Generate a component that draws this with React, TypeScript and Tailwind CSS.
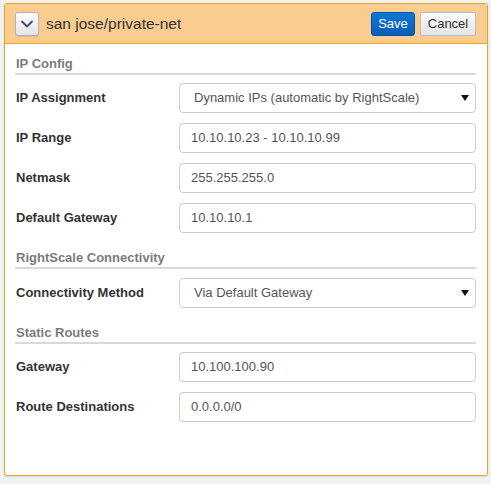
import React from "react";

const font = { fontFamily: '"Liberation Sans", Arial, sans-serif' };

function Heading({ children, mt }: { children: React.ReactNode; mt: string }) {
  return (
    <div className={`${mt} border-b-2 border-[#d9d9d9] text-[13px] leading-[18px] font-bold text-[#7b7b7b] pl-[1px]`}>
      {children}
    </div>
  );
}

function Row({ label, value, select, mt = "mt-[10px]" }: { label: string; value: string; select?: boolean; mt?: string }) {
  return (
    <div className={`flex items-center h-[30px] ${mt}`}>
      <div className="w-[164px] pl-[1px] text-[13px] font-bold text-[#333]">{label}</div>
      <div className="flex-1 h-[30px] border border-[#cccccc] rounded-[4px] bg-white flex items-center justify-between">
        <span className={`${select ? "pl-[14px]" : "pl-[11px]"} text-[13px] text-[#555]`}>{value}</span>
        {select && (
          <svg width="8" height="6" viewBox="0 0 8 6" className="mr-[6px]">
            <path d="M0 0 L8 0 L4 6 Z" fill="#111" />
          </svg>
        )}
      </div>
    </div>
  );
}

export default function App() {
  return (
    <div className="w-[491px] h-[484px] bg-[#f1f2f4] pt-[3px] pl-[4px]" style={font}>
      <div className="w-[484px] h-[473px] border border-[#efa420] rounded-[3px] bg-white shadow-[0_1px_2px_rgba(0,0,0,0.12)] overflow-hidden">
        <div className="h-[40px] bg-[#f9cd8f] border-b border-[#efa420] flex items-center pl-[10px] pr-[11px]">
          <div className="w-[24px] h-[24px] rounded-[3px] border border-[#b5b5b5] bg-gradient-to-b from-[#ffffff] to-[#e2e4e8] flex items-center justify-center shadow-[0_1px_1px_rgba(0,0,0,0.1)]">
            <svg width="12" height="8" viewBox="0 0 12 8">
              <path d="M1 1.5 L6 6.5 L11 1.5" fill="none" stroke="#3d4a66" strokeWidth="1.8" strokeLinecap="round" strokeLinejoin="round" />
            </svg>
          </div>
          <div className="ml-[7px] text-[15.5px] text-[#333]">san jose/private-net</div>
          <div className="ml-auto flex gap-[5px]">
            <div className="w-[44px] h-[24px] rounded-[3px] border border-[#0a52a6] bg-gradient-to-b from-[#0b78d8] to-[#0a5dba] text-white text-[13px] flex items-center justify-center">
              Save
            </div>
            <div className="w-[56px] h-[24px] rounded-[3px] border border-[#bdbdbd] bg-gradient-to-b from-[#fbfbfb] to-[#e4e5e8] text-[#333] text-[13px] flex items-center justify-center">
              Cancel
            </div>
          </div>
        </div>
        <div className="pl-[10px] pr-[11px] pt-[11px]">
          <Heading mt="mt-0">IP Config</Heading>
          <Row label="IP Assignment" value="Dynamic IPs (automatic by RightScale)" select mt="mt-[8px]" />
          <Row label="IP Range" value="10.10.10.23 - 10.10.10.99" />
          <Row label="Netmask" value="255.255.255.0" />
          <Row label="Default Gateway" value="10.10.10.1" />
          <Heading mt="mt-[16px]">RightScale Connectivity</Heading>
          <Row label="Connectivity Method" value="Via Default Gateway" select mt="mt-[9px]" />
          <Heading mt="mt-[16px]">Static Routes</Heading>
          <Row label="Gateway" value="10.100.100.90" mt="mt-[8px]" />
          <Row label="Route Destinations" value="0.0.0.0/0" />
        </div>
      </div>
    </div>
  );
}
